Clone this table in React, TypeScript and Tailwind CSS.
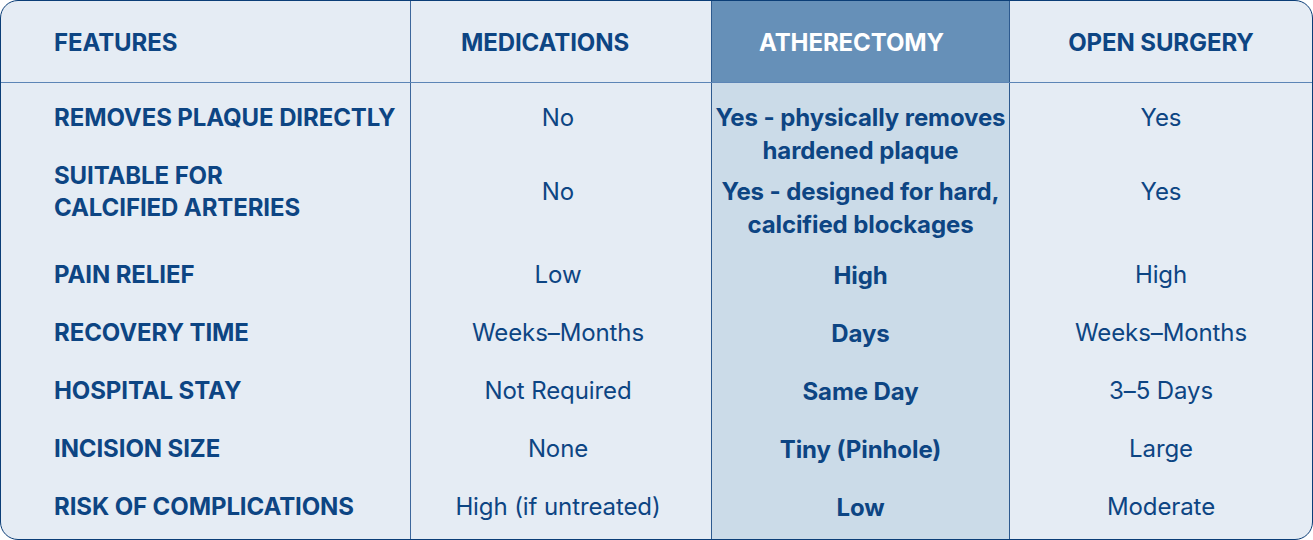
const rows = [
  { label: ["REMOVES PLAQUE DIRECTLY"], med: "No", ath: ["Yes - physically removes", "hardened plaque"], open: "Yes" },
  { label: ["SUITABLE FOR", "CALCIFIED ARTERIES"], med: "No", ath: ["Yes - designed for hard,", "calcified blockages"], open: "Yes" },
  { label: ["PAIN RELIEF"], med: "Low", ath: ["High"], open: "High" },
  { label: ["RECOVERY TIME"], med: "Weeks–Months", ath: ["Days"], open: "Weeks–Months" },
  { label: ["HOSPITAL STAY"], med: "Not Required", ath: ["Same Day"], open: "3–5 Days" },
  { label: ["INCISION SIZE"], med: "None", ath: ["Tiny (Pinhole)"], open: "Large" },
  { label: ["RISK OF COMPLICATIONS"], med: "High (if untreated)", ath: ["Low"], open: "Moderate" },
];

const cols = "grid grid-cols-[409px_301px_299px_1fr]";

function Lines({ lines }: { lines: string[] }) {
  return (
    <>
      {lines.map((l) => (
        <div key={l}>{l}</div>
      ))}
    </>
  );
}

export default function App() {
  return (
    <div className="h-[540px] w-[1313px] bg-white font-['Inter',sans-serif] text-[24px] leading-[32px] tracking-[-0.1px] text-[#0d4583]">
      <div className="flex h-full flex-col overflow-hidden rounded-[18px] border border-[#0b3e77] bg-[#e5ecf4]">
        {/* header */}
        <div className={`${cols} h-[82px] shrink-0 border-b border-[#5c85b6] font-bold`}>
          <div className="flex items-center pl-[53px] pt-[2px]">FEATURES</div>
          <div className="flex items-center justify-center border-l border-[#3d679c] pr-[32px] pt-[2px]">MEDICATIONS</div>
          <div className="flex items-center justify-center border-x border-[#2d5a8f] bg-[#6690b8] pr-[18px] pt-[2px] text-white">
            ATHERECTOMY
          </div>
          <div className="flex items-center justify-center pt-[2px]">OPEN SURGERY</div>
        </div>

        {/* body */}
        <div className="flex flex-1 flex-col">
          {rows.map((r, i) => {
            const first = i === 0;
            const second = i === 1;
            const h = first ? "h-[76px]" : second ? "h-[87px]" : "h-[58px]";
            const align = first || second ? "items-start" : "items-center";
            const pt = first ? "pt-[19px]" : second ? "pt-[17px]" : "";
            return (
              <div key={i} className={`${cols} ${h} shrink-0`}>
                <div className={`flex ${align} ${first ? pt : ""} ${second ? "pt-px" : ""} pl-[53px] font-bold`}>
                  <div>
                    <Lines lines={r.label} />
                  </div>
                </div>
                <div className={`flex ${align} ${pt} justify-center border-l border-[#3d679c] pr-[6px]`}>{r.med}</div>
                <div
                  className={`flex ${align} ${first ? "pt-[18px]" : second ? "pt-[16px]" : ""} justify-center whitespace-nowrap border-x border-[#2d5a8f] bg-[#cbdbe8] text-center font-bold`}
                >
                  <div className="relative z-10 leading-[33px]">
                    <Lines lines={r.ath} />
                  </div>
                </div>
                <div className={`flex ${align} ${pt} justify-center`}>{r.open}</div>
              </div>
            );
          })}
          <div className={`${cols} flex-1`}>
            <div />
            <div className="border-l border-[#3d679c]" />
            <div className="border-x border-[#2d5a8f] bg-[#cbdbe8]" />
            <div />
          </div>
        </div>
      </div>
    </div>
  );
}
